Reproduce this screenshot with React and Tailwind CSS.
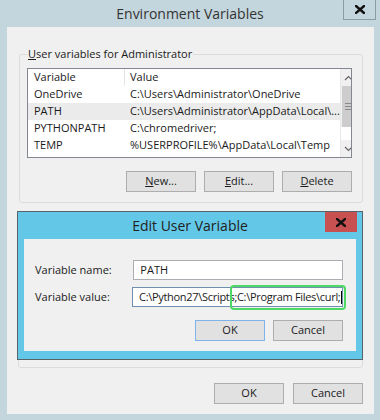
import React from 'react';

const XMark = ({ className = '' }) => (
  <svg width="10" height="9" viewBox="0 0 10 9" className={className}>
    <path d="M1 1 L9 8 M9 1 L1 8" stroke="#111" strokeWidth="2.4" strokeLinecap="square" />
  </svg>
);

const Chevron = ({ up }) => (
  <svg width="9" height="6" viewBox="0 0 9 6">
    <path d={up ? 'M1 5 L4.5 1.5 L8 5' : 'M1 1 L4.5 4.5 L8 1'} stroke="#606060" strokeWidth="1.1" fill="none" />
  </svg>
);

const WinButton = ({ children, primary = false, className = '' }) => (
  <div
    className={`w-[70px] h-[21px] flex items-center justify-center text-[11px] bg-[#e1e1e1] border ${
      primary ? 'border-[#7eb4ea]' : 'border-[#adadad]'
    } ${className}`}
  >
    {children}
  </div>
);

const rows = [
  ['OneDrive', 'C:\\Users\\Administrator\\OneDrive'],
  ['PATH', 'C:\\Users\\Administrator\\AppData\\Local\\...'],
  ['PYTHONPATH', 'C:\\chromedriver;'],
  ['TEMP', '%USERPROFILE%\\AppData\\Local\\Temp'],
];

export default function App() {
  return (
    <div className="relative w-[380px] h-[420px] overflow-hidden bg-[#c4d6dd] font-['Open_Sans',sans-serif] text-[#1a1a1a]">
      {/* Title bar */}
      <div className="relative h-[27px] flex items-center justify-center">
        <span className="text-[14px] text-[#333] -mt-[1px]">Environment Variables</span>
        <div className="absolute right-[4px] top-0 w-[33px] h-[20px] border border-t-0 border-[#8d9ca2] flex items-center justify-center">
          <XMark />
        </div>
      </div>

      {/* Client area */}
      <div className="ml-[7px] w-[367px] h-[387px] bg-[#f0f0f0] pt-[20px] px-[11px] flex flex-col">
        {/* User variables */}
        <fieldset className="ml-[1px] h-[156px] border border-[#dcdcdc] rounded-[3px] pl-[7px] pr-[10px]">
          <legend className="px-[1px] text-[11px] leading-[14px]">
            <span className="underline">U</span>ser variables for Administrator
          </legend>
          <div className="mt-[7px] w-[325px] h-[90px] border border-[#828790] bg-white flex overflow-hidden text-[11px]">
            <div className="flex-1 flex flex-col">
              <div className="h-[17px] shrink-0 flex items-center">
                <div className="w-[97px] h-full pl-[6px] flex items-center border-r border-[#e5e5e5]">Variable</div>
                <div className="pl-[5px]">Value</div>
              </div>
              {rows.map(([name, value]) => (
                <div
                  key={name}
                  className={`h-[17px] shrink-0 flex items-center ${name === 'PATH' ? 'bg-[#ebebeb]' : ''}`}
                >
                  <div className="w-[97px] pl-[6px] whitespace-nowrap">{name}</div>
                  <div className="pl-[5px] whitespace-nowrap">{value}</div>
                </div>
              ))}
            </div>
            <div className="w-[17px] shrink-0 flex flex-col bg-[#f0f0f0] border-l border-[#e8e8e8]">
              <div className="h-[17px] flex items-center justify-center">
                <Chevron up />
              </div>
              <div className="h-[41px] mx-[1px] bg-[#cdcdcd] flex items-center justify-center">
                <div className="w-[7px] flex flex-col gap-[2px]">
                  <div className="h-px bg-[#8a8a8a]" />
                  <div className="h-px bg-[#8a8a8a]" />
                  <div className="h-px bg-[#8a8a8a]" />
                </div>
              </div>
              <div className="flex-1 bg-white" />
              <div className="h-[17px] flex items-center justify-center">
                <Chevron />
              </div>
            </div>
          </div>
          <div className="mt-[13px] flex justify-end gap-[8px]">
            <WinButton>
              <span className="underline">N</span>ew...
            </WinButton>
            <WinButton>
              <span className="underline">E</span>dit...
            </WinButton>
            <WinButton>
              <span className="underline">D</span>elete
            </WinButton>
          </div>
        </fieldset>

        {/* System variables group (hidden behind the dialog) */}
        <div className="mt-[12px] h-[153px] border border-[#dcdcdc] rounded-[3px]" />

        <div className="mt-[15px] flex justify-end gap-[9px]">
          <WinButton>OK</WinButton>
          <WinButton>Cancel</WinButton>
        </div>
      </div>

      {/* Edit User Variable dialog */}
      <div className="absolute left-[17px] top-[211px] w-[346px] h-[149px] bg-[#63c8e8] border border-[#56646a] flex flex-col">
        <div className="relative h-[27px] shrink-0 flex items-center justify-center">
          <span className="text-[14px] text-[#222]">Edit User Variable</span>
          <div className="absolute right-[5px] top-0 w-[32px] h-[20px] bg-[#c75050] flex items-center justify-center">
            <XMark />
          </div>
        </div>
        <div className="mx-[6px] h-[112px] bg-[#f0f0f0] pt-[21px] pl-[11px] pr-[13px] text-[11px]">
          <div className="flex items-center h-[20px]">
            <div className="w-[99px]">Variable name:</div>
            <div className="w-[211px] h-[20px] bg-white border border-[#abadb3] flex items-center pl-[6px]">PATH</div>
          </div>
          <div className="mt-[7px] flex items-center h-[20px]">
            <div className="w-[99px]">Variable value:</div>
            <div className="relative w-[211px] h-[20px] bg-white border border-[#6f8fb0] flex items-center pl-[6px] whitespace-nowrap">
              <span className="tracking-[-0.3px]">C:\Python27\Scripts;C:\Program Files\curl;</span>
              <span className="w-px h-[13px] bg-black ml-[1px]" />
              <div className="absolute left-[97px] -top-[3px] w-[116px] h-[25px] border-2 border-[#4cd964] rounded-[4px]" />
            </div>
          </div>
          <div className="mt-[13px] flex justify-end gap-[8px]">
            <WinButton primary>OK</WinButton>
            <WinButton>Cancel</WinButton>
          </div>
        </div>
      </div>
    </div>
  );
}
